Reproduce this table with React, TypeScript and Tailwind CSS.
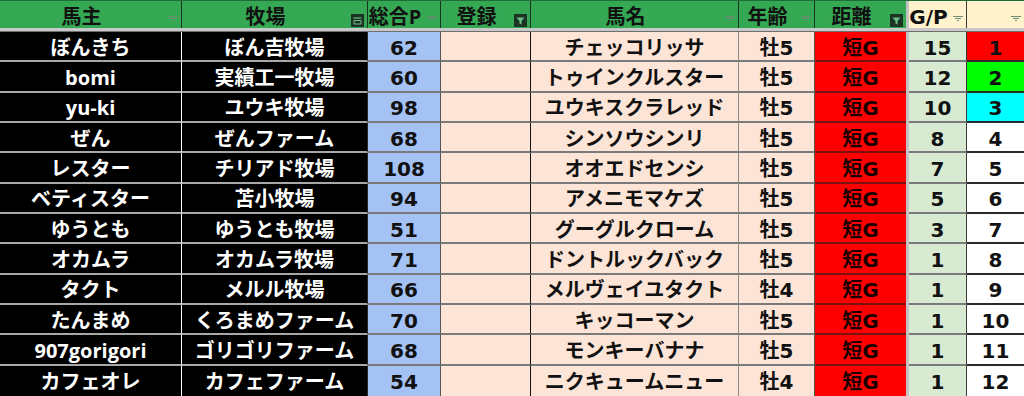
import React from "react";

type Row = {
  owner: string;
  farm: string;
  p: string;
  horse: string;
  age: string;
  gp: string;
  rank: string;
  rankBg: string;
};

const rows: Row[] = [
  { owner: "ぼんきち", farm: "ぼん吉牧場", p: "62", horse: "チェッコリッサ", age: "牡5", gp: "15", rank: "1", rankBg: "bg-[#ff0000]" },
  { owner: "bomi", farm: "実績工一牧場", p: "60", horse: "トゥインクルスター", age: "牡5", gp: "12", rank: "2", rankBg: "bg-[#00ff00]" },
  { owner: "yu-ki", farm: "ユウキ牧場", p: "98", horse: "ユウキスクラレッド", age: "牡5", gp: "10", rank: "3", rankBg: "bg-[#00ffff]" },
  { owner: "ぜん", farm: "ぜんファーム", p: "68", horse: "シンソウシンリ", age: "牡5", gp: "8", rank: "4", rankBg: "bg-white" },
  { owner: "レスター", farm: "チリアド牧場", p: "108", horse: "オオエドセンシ", age: "牡5", gp: "7", rank: "5", rankBg: "bg-white" },
  { owner: "ベティスター", farm: "苫小牧場", p: "94", horse: "アメニモマケズ", age: "牡5", gp: "5", rank: "6", rankBg: "bg-white" },
  { owner: "ゆうとも", farm: "ゆうとも牧場", p: "51", horse: "グーグルクローム", age: "牡5", gp: "3", rank: "7", rankBg: "bg-white" },
  { owner: "オカムラ", farm: "オカムラ牧場", p: "71", horse: "ドントルックバック", age: "牡5", gp: "1", rank: "8", rankBg: "bg-white" },
  { owner: "タクト", farm: "メルル牧場", p: "66", horse: "メルヴェイユタクト", age: "牡4", gp: "1", rank: "9", rankBg: "bg-white" },
  { owner: "たんまめ", farm: "くろまめファーム", p: "70", horse: "キッコーマン", age: "牡5", gp: "1", rank: "10", rankBg: "bg-white" },
  { owner: "907gorigori", farm: "ゴリゴリファーム", p: "68", horse: "モンキーバナナ", age: "牡5", gp: "1", rank: "11", rankBg: "bg-white" },
  { owner: "カフェオレ", farm: "カフェファーム", p: "54", horse: "ニクキュームニュー", age: "牡4", gp: "1", rank: "12", rankBg: "bg-white" },
];

const GRID =
  "grid grid-cols-[182px_186px_73px_90px_208px_76px_91px_3px_58px_57px]";

function FilterIcon() {
  return (
    <svg width="10" height="7" viewBox="0 0 10 7" className="shrink-0">
      <path d="M0 1.5h10M2 3.5h6M4 5.5h2" stroke="#6f8c74" strokeWidth="1" />
    </svg>
  );
}

function FunnelBox() {
  return (
    <svg width="13" height="13" viewBox="0 0 13 13" className="shrink-0">
      <rect x="0" y="0" width="13" height="13" fill="#1d3324" />
      <path d="M2.5 3.5h8l-3 3.5v3.5l-2 -1v-2.5z" fill="#6fbf86" />
    </svg>
  );
}

function SortBox() {
  return (
    <svg width="13" height="13" viewBox="0 0 13 13" className="shrink-0">
      <rect x="0" y="0" width="13" height="13" fill="#1d3324" />
      <path d="M2.5 4h8" stroke="#6fbf86" strokeWidth="1.2" />
      <path d="M3 6.5h7v3.5h-7z" fill="none" stroke="#6fbf86" strokeWidth="1" />
    </svg>
  );
}

function HeadCell({
  label,
  icon,
  cls,
}: {
  label: string;
  icon: "f" | "funnel" | "sort";
  cls: string;
}) {
  return (
    <div className={`flex items-stretch h-full ${cls}`}>
      <div className="flex-1 min-w-0 flex items-center justify-center pt-[4px] whitespace-nowrap overflow-visible">
        {label}
      </div>
      <div className="flex items-end pb-[1px] pr-[3px] pl-[2px] w-[18px] justify-end">
        {icon === "f" ? (
          <div className="pb-[5px]">
            <FilterIcon />
          </div>
        ) : icon === "funnel" ? (
          <FunnelBox />
        ) : (
          <SortBox />
        )}
      </div>
    </div>
  );
}

export default function App() {
  const cjk = "font-['Open_Sans','Noto_Sans_CJK_JP',sans-serif]";
  const num = "font-['DejaVu_Sans','Noto_Sans_CJK_JP',sans-serif]";
  const cell = "flex items-center justify-center pt-[3px] whitespace-nowrap";
  return (
    <div
      className={`w-[1024px] h-[396px] overflow-hidden bg-white font-bold text-[20px] leading-none text-[#111] ${cjk}`}
    >
      {/* header */}
      <div className={`${GRID} h-[28px] border-t border-[#1f6e37]`}>
        <HeadCell label="馬主" icon="f" cls="bg-[#34a853] border-r border-[#1c3523]" />
        <HeadCell label="牧場" icon="sort" cls="bg-[#34a853] border-r border-[#1c3523]" />
        <HeadCell label="総合P" icon="f" cls="bg-[#34a853] border-r border-[#1c3523]" />
        <HeadCell label="登録" icon="funnel" cls="bg-[#34a853] border-r border-[#1c3523]" />
        <HeadCell label="馬名" icon="f" cls="bg-[#34a853] border-r border-[#1c3523]" />
        <HeadCell label="年齢" icon="f" cls="bg-[#34a853] border-r border-[#1c3523]" />
        <HeadCell label="距離" icon="funnel" cls="bg-[#34a853]" />
        <div className="bg-[#c4c4c4]" />
        <HeadCell label="G/P" icon="f" cls={`bg-[#fff2cc] border-r border-[#3a3a3a] ${num}`} />
        <HeadCell label="" icon="f" cls="bg-[#fff2cc]" />
      </div>
      {/* band */}
      <div className="h-[4px] bg-[#c8c8c8] border-b border-[#6e6e6e]" />
      {/* body */}
      <div className="grid grid-rows-[repeat(12,1fr)] h-[364px]">
        {rows.map((r, i) => {
          const last = i === rows.length - 1;
          const bb = last ? "" : "border-b-2";
          return (
            <div key={i} className={`${GRID} min-h-0`}>
              <div className={`bg-black text-white ${cell} border-r border-white ${bb} border-b-[#a8a8a8]`}>
                {r.owner}
              </div>
              <div className={`bg-black text-white ${cell} border-r border-r-[#2a2a2a] ${bb} border-b-[#a8a8a8]`}>
                {r.farm}
              </div>
              <div className={`bg-[#a4c2f4] ${cell} border-r border-r-[#555] ${bb} border-b-[#7a7a7a] ${num}`}>
                {r.p}
              </div>
              <div className={`bg-[#fce4d6] border-r border-r-[#111] ${bb} border-b-[#7a7a7a]`} />
              <div className={`bg-[#fce4d6] ${cell} border-r border-r-[#8a8a8a] ${bb} border-b-[#7a7a7a]`}>
                {r.horse}
              </div>
              <div className={`bg-[#fce4d6] ${cell} border-r border-r-[#555] ${bb} border-b-[#7a7a7a] ${num}`}>
                {r.age}
              </div>
              <div className={`bg-[#ff0000] text-[#1a0000] ${cell} ${bb} border-b-[#7a1010] ${num}`}>
                短G
              </div>
              <div className="bg-[#c4c4c4]" />
              <div className={`bg-[#d9ead3] ${cell} border-r border-r-[#3a3a3a] ${bb} border-b-[#7a7a7a] ${num}`}>
                {r.gp}
              </div>
              <div className={`${r.rankBg} ${cell} ${bb} border-b-[#2a2a2a] ${num}`}>
                {r.rank}
              </div>
            </div>
          );
        })}
      </div>
    </div>
  );
}
